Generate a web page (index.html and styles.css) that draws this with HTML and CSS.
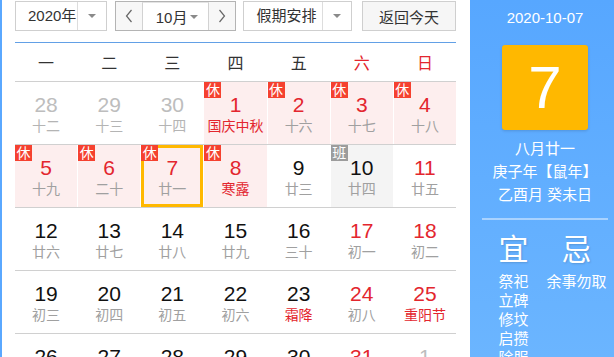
FILE: index.html
```html
<!DOCTYPE html>
<html lang="zh-CN">
<head>
    <meta charset="UTF-8">
    <title>万年历</title>
    <link rel="stylesheet" href="styles.css">
</head>
<body>
    <div class="calendar">
        <div class="main">
            <div class="toolbar">
                <div class="select select-year">
                    <span class="select-text">2020年</span>
                    <span class="select-arrow"><i class="caret"></i></span>
                </div>

                <div class="month-group">
                    <button class="nav-btn">
                        <svg width="8" height="14" viewBox="0 0 8 14"><polyline points="6.5,1 1.5,7 6.5,13" fill="none" stroke="#666" stroke-width="1.2"/></svg>
                    </button>
                    <div class="month-select">
                        <span>10月</span>
                        <i class="caret"></i>
                    </div>
                    <button class="nav-btn">
                        <svg width="8" height="14" viewBox="0 0 8 14"><polyline points="1.5,1 6.5,7 1.5,13" fill="none" stroke="#666" stroke-width="1.2"/></svg>
                    </button>
                </div>

                <div class="select select-holiday">
                    <span class="select-text">假期安排</span>
                    <span class="select-arrow"><i class="caret"></i></span>
                </div>

                <button class="today-btn">返回今天</button>
            </div>

            <div class="weekdays">
                <span>一</span>
                <span>二</span>
                <span>三</span>
                <span>四</span>
                <span>五</span>
                <span class="weekend">六</span>
                <span class="weekend">日</span>
            </div>

            <div class="week">
                <div class="day other"><b>28</b><em>十二</em></div>
                <div class="day other"><b>29</b><em>十三</em></div>
                <div class="day other"><b>30</b><em>十四</em></div>
                <div class="day rest red"><span class="tag">休</span><b>1</b><em class="fest">国庆中秋</em></div>
                <div class="day rest red"><span class="tag">休</span><b>2</b><em>十六</em></div>
                <div class="day rest red"><span class="tag">休</span><b>3</b><em>十七</em></div>
                <div class="day rest red"><span class="tag">休</span><b>4</b><em>十八</em></div>
            </div>

            <div class="week">
                <div class="day rest red"><span class="tag">休</span><b>5</b><em>十九</em></div>
                <div class="day rest red"><span class="tag">休</span><b>6</b><em>二十</em></div>
                <div class="day rest red today"><span class="tag">休</span><b>7</b><em>廿一</em></div>
                <div class="day rest red"><span class="tag">休</span><b>8</b><em class="fest">寒露</em></div>
                <div class="day"><b>9</b><em>廿三</em></div>
                <div class="day work"><span class="tag">班</span><b>10</b><em>廿四</em></div>
                <div class="day red"><b>11</b><em>廿五</em></div>
            </div>

            <div class="week">
                <div class="day"><b>12</b><em>廿六</em></div>
                <div class="day"><b>13</b><em>廿七</em></div>
                <div class="day"><b>14</b><em>廿八</em></div>
                <div class="day"><b>15</b><em>廿九</em></div>
                <div class="day"><b>16</b><em>三十</em></div>
                <div class="day red"><b>17</b><em>初一</em></div>
                <div class="day red"><b>18</b><em>初二</em></div>
            </div>

            <div class="week">
                <div class="day"><b>19</b><em>初三</em></div>
                <div class="day"><b>20</b><em>初四</em></div>
                <div class="day"><b>21</b><em>初五</em></div>
                <div class="day"><b>22</b><em>初六</em></div>
                <div class="day"><b>23</b><em class="fest">霜降</em></div>
                <div class="day red"><b>24</b><em>初八</em></div>
                <div class="day red"><b>25</b><em class="fest">重阳节</em></div>
            </div>

            <div class="week">
                <div class="day"><b>26</b><em>初十</em></div>
                <div class="day"><b>27</b><em>十一</em></div>
                <div class="day"><b>28</b><em>十二</em></div>
                <div class="day"><b>29</b><em>十三</em></div>
                <div class="day"><b>30</b><em>十四</em></div>
                <div class="day red"><b>31</b><em>十五</em></div>
                <div class="day other"><b>1</b><em>十六</em></div>
            </div>
        </div>

        <aside class="panel">
            <div class="panel-date">2020-10-07</div>
            <div class="day-box">7</div>
            <div class="lunar">
                <div>八月廿一</div>
                <div>庚子年【鼠年】</div>
                <div>乙酉月 癸未日</div>
            </div>
            <div class="divider"></div>
            <div class="yiji">
                <div class="yiji-col">
                    <div class="yiji-title">宜</div>
                    <ul class="yiji-list">
                        <li>祭祀</li>
                        <li>立碑</li>
                        <li>修坟</li>
                        <li>启攒</li>
                        <li>除服</li>
                    </ul>
                </div>
                <div class="yiji-col">
                    <div class="yiji-title">忌</div>
                    <ul class="yiji-list">
                        <li>余事勿取</li>
                    </ul>
                </div>
            </div>
        </aside>
    </div>
</body>
</html>
```

FILE: styles.css
```css
body {
    margin: 0;
    font-family: "Liberation Sans", "Noto Sans CJK SC", sans-serif;
    color: #333;
    background-color: #fff;
    overflow: hidden;
}

.calendar {
    display: flex;
    height: 357px;
    overflow: hidden;
}

.main {
    width: 470px;
    flex: none;
    box-sizing: border-box;
    border-left: 2px solid #5aa8ff;
    padding: 0 14px 0 13px;
}

/* toolbar */
.toolbar {
    display: flex;
    align-items: flex-start;
    height: 43px;
    box-sizing: border-box;
    padding-top: 1px;
    border-bottom: 1px solid #62a0e6;
    font-size: 15px;
}

.select {
    display: flex;
    height: 30px;
    box-sizing: border-box;
    border: 1px solid #cfcfcf;
    background-color: #fff;
}

.select-text {
    flex: 1;
    padding-left: 12px;
    line-height: 28px;
    border-right: 1px solid #ddd;
}

.select-arrow {
    width: 28px;
    display: flex;
    justify-content: center;
    align-items: center;
}

.caret {
    width: 0;
    height: 0;
    border-left: 4px solid transparent;
    border-right: 4px solid transparent;
    border-top: 4px solid #8a8a8a;
}

.select-year {
    width: 92px;
}

.select-holiday {
    width: 109px;
    margin-left: 7px;
}

.month-group {
    display: flex;
    width: 122px;
    height: 30px;
    box-sizing: border-box;
    margin-left: 8px;
    border: 1px solid #b4b4b4;
}

.nav-btn {
    width: 26px;
    padding: 0;
    border: none;
    background-color: #f7f7f7;
    display: flex;
    justify-content: center;
    align-items: center;
}

.month-select {
    flex: 1;
    display: flex;
    align-items: center;
    justify-content: space-between;
    padding: 0 10px 0 13px;
    background-color: #fff;
    border-left: 1px solid #d2d2d2;
    border-right: 1px solid #d2d2d2;
    border-top: 1px solid #e4e4e4;
}

.today-btn {
    width: 94px;
    height: 30px;
    margin-left: 10px;
    border: 1px solid #cfcfcf;
    background-color: #f6f6f6;
    font-family: inherit;
    font-size: 15px;
    color: #333;
    padding: 0;
}

/* grid */
.weekdays,
.week {
    display: grid;
    grid-template-columns: repeat(7, 1fr);
    column-gap: 1px;
    box-sizing: border-box;
    border-bottom: 1px solid #d0d0d0;
}

.weekdays {
    height: 39px;
    align-items: center;
    text-align: center;
    font-size: 16px;
}

.weekdays .weekend {
    color: #e3262e;
}

.week {
    height: 63px;
}

.day {
    position: relative;
    padding-top: 11px;
    text-align: center;
}

.day b {
    display: block;
    font-weight: normal;
    font-size: 21px;
    line-height: 24px;
    color: #111;
}

.day em {
    display: block;
    font-style: normal;
    font-size: 14px;
    line-height: 18px;
    color: #a0a0a0;
}

.day.red b {
    color: #e3262e;
}

.day em.fest {
    color: #e3262e;
}

.day.other b {
    color: #bdbdbd;
}

.day.other em {
    color: #b4b4b4;
}

.day.rest {
    background-color: #fdeeee;
}

.day.work {
    background-color: #f4f4f4;
}

.tag {
    position: absolute;
    left: 0;
    top: 0;
    width: 17px;
    height: 16px;
    line-height: 16px;
    font-size: 14px;
    color: #fff;
    background-color: #f5412f;
    text-align: center;
}

.day.work .tag {
    background-color: #9c9c9c;
}

.day.today {
    box-shadow: inset 0 0 0 3px #ffb800;
}

/* side panel */
.panel {
    width: 144px;
    flex: none;
    box-sizing: border-box;
    padding: 0 6px 0 12px;
    background: linear-gradient(#57a7ff, #6bb5ff);
    color: #fff;
    text-align: center;
}

.panel-date {
    padding-top: 8px;
    font-size: 15px;
    line-height: 20px;
}

.day-box {
    width: 86px;
    height: 85px;
    margin: 17px auto 0;
    border-radius: 3px;
    background-color: #ffb800;
    box-shadow: 0 1px 3px rgba(0, 0, 0, 0.15);
    display: flex;
    justify-content: center;
    align-items: center;
    font-size: 60px;
}

.lunar {
    margin-top: 7px;
    font-size: 15px;
    line-height: 23px;
}

.divider {
    height: 2px;
    margin-top: 12px;
    background-color: rgba(255, 255, 255, 0.45);
}

.yiji {
    display: grid;
    grid-template-columns: 1fr 1fr;
    margin-top: 12px;
}

.yiji-title {
    font-size: 30px;
    line-height: 36px;
    text-shadow: 1px 1px 2px rgba(0, 0, 0, 0.15);
}

.yiji-list {
    list-style: none;
    margin: 4px 0 0;
    padding: 0;
    font-size: 15px;
    line-height: 19px;
}
```
